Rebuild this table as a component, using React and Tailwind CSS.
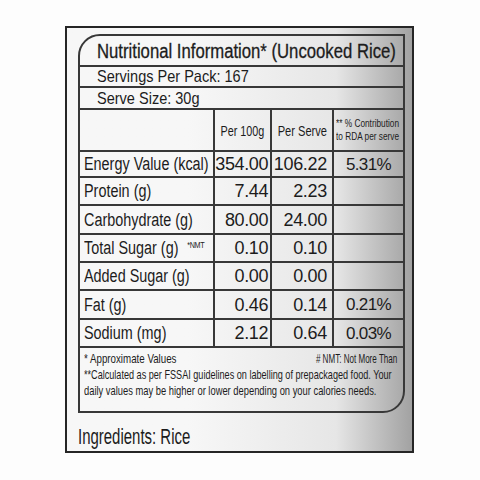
const rows = [
  { name: "Energy Value (kcal)", a: "354.00", b: "106.22", c: "5.31%", h: "h-[26px]" },
  { name: "Protein (g)", a: "7.44", b: "2.23", c: "", h: "h-[28px]" },
  { name: "Carbohydrate (g)", a: "80.00", b: "24.00", c: "", h: "h-[29px]" },
  { name: "Total Sugar (g)", a: "0.10", b: "0.10", c: "", h: "h-[28px]", nmt: true },
  { name: "Added Sugar (g)", a: "0.00", b: "0.00", c: "", h: "h-[28px]" },
  { name: "Fat (g)", a: "0.46", b: "0.14", c: "0.21%", h: "h-[29px]" },
  { name: "Sodium (mg)", a: "2.12", b: "0.64", c: "0.03%", h: "h-[28px]" },
];

const NutritionRow = ({ row }) => (
  <div className={`grid grid-cols-[135px_57px_62px_1fr] border-b-2 border-[#383838] ${row.h}`}>
    <div className="flex items-center border-r-2 border-[#383838] pl-[4px] text-[18px] leading-none">
      <span className="inline-flex origin-left scale-x-[0.8] items-center whitespace-nowrap">
        {row.name}
        {row.nmt && <span className="ml-[11px] -mt-[5px] text-[9px] tracking-[-0.4px]">*NMT</span>}
      </span>
    </div>
    <div className="flex items-center justify-end border-r-2 border-[#383838] pr-[2px] text-[18px] leading-none tracking-[-0.4px]">
      {row.a}
    </div>
    <div className="flex items-center justify-end border-r-2 border-[#383838] pr-[5px] text-[18px] leading-none tracking-[-0.3px]">
      {row.b}
    </div>
    <div className="flex items-center justify-center text-[17px] leading-none tracking-[-0.6px]">
      {row.c}
    </div>
  </div>
);

const App = () => {
  return (
    <div className="min-h-[480px] w-[480px] bg-[#fdfdfd] pt-[26px] pl-[65px] font-['Liberation_Sans','Arial',sans-serif] text-[#1c1c1c]">
      <div className="h-[427px] w-[349px] border-2 border-[#262626] bg-linear-to-r from-[#f7f7f7] from-35% via-[#e6e6e6] via-78% to-[#a2a2a2] pt-[6px] pl-[11px]">
        <div className="w-[327px] overflow-hidden rounded-tl-[22px] rounded-br-[22px] border-2 border-[#383838]">
          <div className="flex h-[31px] items-center border-b-2 border-[#383838] pl-[17px] text-[20px] leading-none">
            <span className="inline-block origin-left scale-x-[0.835] whitespace-nowrap [-webkit-text-stroke:0.3px_#1c1c1c]">
              Nutritional Information* (Uncooked Rice)
            </span>
          </div>
          <div className="flex h-[21px] items-center border-b-2 border-[#383838] pl-[17px] text-[16.5px] leading-none">
            <span className="inline-block origin-left scale-x-[0.88] whitespace-nowrap">Servings Per Pack: 167</span>
          </div>
          <div className="flex h-[22px] items-center border-b-2 border-[#383838] pl-[17px] text-[16.5px] leading-none">
            <span className="inline-block origin-left scale-x-[0.88] whitespace-nowrap">Serve Size: 30g</span>
          </div>
          <div className="grid h-[42px] grid-cols-[135px_57px_62px_1fr] border-b-2 border-[#383838]">
            <div className="border-r-2 border-[#383838]" />
            <div className="flex items-center justify-center border-r-2 border-[#383838] text-[15px] leading-none">
              <span className="inline-block scale-x-[0.72] whitespace-nowrap">Per 100g</span>
            </div>
            <div className="flex items-center justify-center border-r-2 border-[#383838] text-[15px] leading-none">
              <span className="inline-block scale-x-[0.74] whitespace-nowrap">Per Serve</span>
            </div>
            <div className="flex flex-col items-start justify-center pl-[2px] text-[11.5px] leading-[13px]">
              <span className="inline-block origin-left scale-x-[0.72] whitespace-nowrap">** % Contribution</span>
              <span className="inline-block origin-left scale-x-[0.72] whitespace-nowrap">to RDA per serve</span>
            </div>
          </div>
          {rows.map((row) => (
            <NutritionRow key={row.name} row={row} />
          ))}
          <div className="h-[63px] pl-[4px] pr-[6px] pt-[3px] text-[13px] leading-[16px]">
            <div className="flex justify-between">
              <span className="inline-block origin-left scale-x-[0.75] whitespace-nowrap">* Approximate Values</span>
              <span className="inline-block origin-right scale-x-[0.62] whitespace-nowrap"># NMT: Not More Than</span>
            </div>
            <div className="origin-left scale-x-[0.7] whitespace-nowrap">
              **Calculated as per FSSAI guidelines on labelling of prepackaged food. Your
            </div>
            <div className="origin-left scale-x-[0.72] whitespace-nowrap">
              daily values may be higher or lower depending on your calories needs.
            </div>
          </div>
        </div>
        <div className="mt-[12px] text-[22px] leading-[24px]">
          <span className="inline-block origin-left scale-x-[0.68] whitespace-nowrap">Ingredients: Rice</span>
        </div>
      </div>
    </div>
  );
};

export default App;
